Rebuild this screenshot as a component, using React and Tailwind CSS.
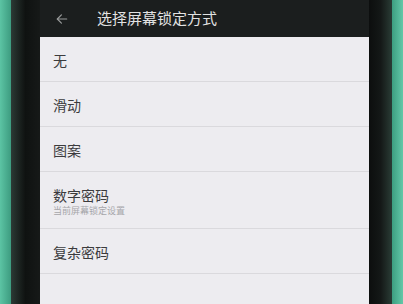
const ITEMS = [
  { label: "无" },
  { label: "滑动" },
  { label: "图案" },
  { label: "数字密码", sub: "当前屏幕锁定设置" },
  { label: "复杂密码" },
]

export default function App() {
  return (
    <div
      className="w-[403px] h-[304px] flex overflow-hidden bg-[#48b494]"
      style={{ fontFamily: '"Noto Sans CJK SC", "Noto Sans", sans-serif' }}
    >
      {/* green desk, left */}
      <div className="w-[11px] shrink-0 bg-gradient-to-r from-[#5cc4a4] to-[#3d9c80]" />

      {/* left bezel */}
      <div className="w-[29px] shrink-0 bg-gradient-to-r from-[#2c3a35] via-[#0f1211] to-[#161918]" />

      {/* screen */}
      <div className="w-[329px] shrink-0 flex flex-col bg-[#edecf0]">
        <div className="h-[37px] shrink-0 bg-[#1b1e1e] flex items-center">
          <svg className="ml-[15px] w-[14px] h-[14px]" viewBox="0 0 24 24" fill="none" stroke="#9a9c9c" strokeWidth="2" strokeLinecap="round" strokeLinejoin="round">
            <path d="M20 12H4" />
            <path d="M11 5l-7 7 7 7" />
          </svg>
          <span className="ml-[28px] text-[15px] text-[#e2e2e2]">选择屏幕锁定方式</span>
        </div>

        {ITEMS.map((item) => (
          <div
            key={item.label}
            className={`${item.sub ? "h-[57px]" : "h-[45px]"} shrink-0 border-b border-[#dad9dd] flex flex-col justify-center pl-[13px] pt-[2px]`}
          >
            <span className="text-[14px] leading-[18px] text-[#3b3b3d]">{item.label}</span>
            {item.sub && (
              <span className="text-[9px] leading-[12px] text-[#a6a6aa] mt-[1px]">{item.sub}</span>
            )}
          </div>
        ))}

        <div className="flex-1" />
      </div>

      {/* right bezel */}
      <div className="w-[23px] shrink-0 bg-gradient-to-r from-[#0c0e0e] via-[#141817] to-[#2a3d36]" />

      {/* green desk, right */}
      <div className="w-[11px] shrink-0 bg-gradient-to-r from-[#3c9e80] to-[#62c8a8]" />
    </div>
  )
}
